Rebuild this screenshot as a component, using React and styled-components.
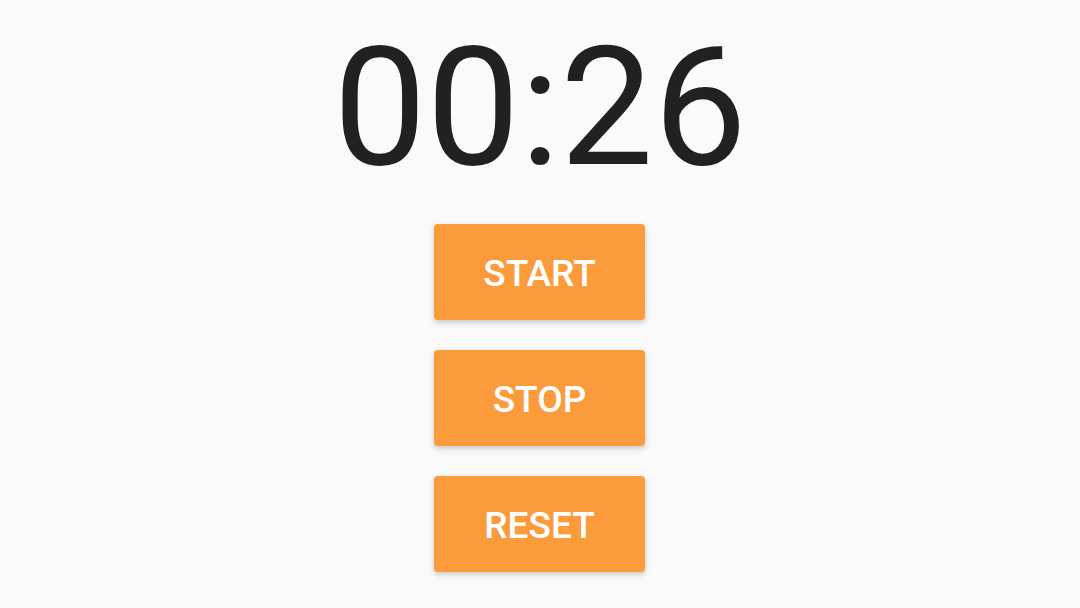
import React from "react";
import styled, { createGlobalStyle } from "styled-components";

const Global = createGlobalStyle`
  html, body { margin: 0; padding: 0; background: #fafafa; }
  body { font-family: Roboto, "Noto Sans", sans-serif; }
`;

const Page = styled.div`
  width: 1080px;
  height: 608px;
  display: flex;
  flex-direction: column;
  align-items: center;
  background: #fafafa;
  padding-top: 25px;
  box-sizing: border-box;
`;

const Time = styled.div`
  font-family: Roboto, sans-serif;
  font-size: 166px;
  line-height: 1;
  font-weight: 400;
  color: #212121;
  margin-bottom: 33px;
`;

const Buttons = styled.div`
  display: flex;
  flex-direction: column;
  gap: 30px;
  margin-right: 1px;
`;

const Button = styled.button`
  width: 211px;
  height: 96px;
  border: none;
  border-radius: 4px;
  background: #fb9b3c;
  color: #ffffff;
  font-family: Roboto, sans-serif;
  font-weight: 500;
  font-size: 37px;
  letter-spacing: 0;
  padding: 2px 0 0;
  box-shadow: 0 2px 4px rgba(0,0,0,0.12), 0 3px 9px rgba(0,0,0,0.10);
  cursor: pointer;
`;

export default function App() {
  return (
    <>
      <Global />
      <Page>
        <Time>00:26</Time>
        <Buttons>
          <Button>START</Button>
          <Button>STOP</Button>
          <Button>RESET</Button>
        </Buttons>
      </Page>
    </>
  );
}
